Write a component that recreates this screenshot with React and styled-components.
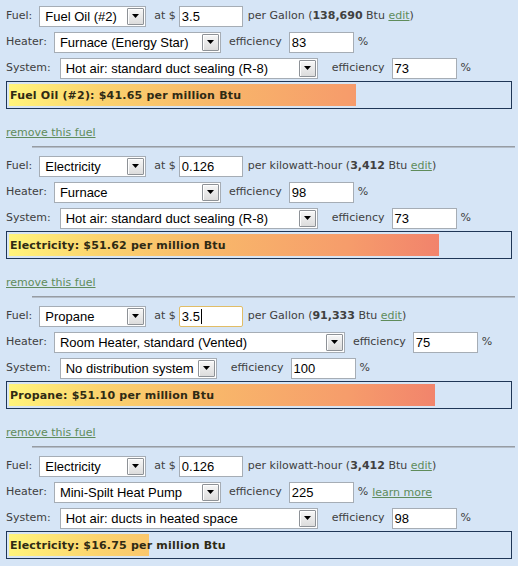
import React from "react";
import styled, { createGlobalStyle } from "styled-components";

const GlobalStyle = createGlobalStyle`
  html, body { margin: 0; padding: 0; background: #d6e5f6; overflow: hidden; }
  body {
    font-family: "DejaVu Sans", Verdana, sans-serif;
    font-size: 11px;
    color: #404040;
  }
`;

const Page = styled.div`
  width: 518px;
  background: #d6e5f6;
`;

const Block = styled.section`
  display: flex;
  flex-direction: column;
  padding-top: 5px;
`;

const Row = styled.div`
  display: flex;
  align-items: center;
  height: 22px;
  padding-left: 6px;
  white-space: nowrap;
  & + & { margin-top: 4px; }
`;

const Text = styled.span`
  margin-left: ${(p) => p.$ml || 0}px;
  line-height: 14px;
`;

const Link = styled.a`
  color: #5f8c5b;
  text-decoration: underline;
  margin-left: ${(p) => p.$ml || 0}px;
  cursor: pointer;
`;

const SelectBox = styled.div`
  box-sizing: border-box;
  display: flex;
  align-items: center;
  width: ${(p) => p.$w}px;
  height: 21px;
  margin-left: ${(p) => p.$ml || 0}px;
  padding: 1px;
  background: #fff;
  border: 1px solid #a6adb5;
  font-family: "Liberation Sans", Arial, sans-serif;
  font-size: 13px;
  color: #000;
`;

const SelectText = styled.span`
  flex: 1;
  padding-left: 4px;
  overflow: hidden;
  white-space: nowrap;
`;

const ArrowBtn = styled.span`
  box-sizing: border-box;
  display: flex;
  align-items: center;
  justify-content: center;
  width: 17px;
  height: 17px;
  border: 1px solid #8e9297;
  border-radius: 1px;
  background: linear-gradient(#f7f7f7, #dcdcdc);
  box-shadow: inset 1px 1px 0 #ffffff;
`;

const Field = styled.div`
  box-sizing: border-box;
  display: flex;
  align-items: center;
  width: ${(p) => p.$w || 65}px;
  height: 21px;
  margin-left: ${(p) => p.$ml || 0}px;
  padding-left: 2px;
  background: #fff;
  border: 1px solid ${(p) => (p.$focused ? "#e1bd67" : "#a6adb5")};
  border-radius: ${(p) => (p.$focused ? "2px" : "0")};
  font-family: "Liberation Sans", Arial, sans-serif;
  font-size: 13px;
  color: #000;
`;

const Caret = styled.span`
  display: inline-block;
  width: 1px;
  height: 15px;
  background: #000;
  margin-left: 1px;
`;

const BarBox = styled.div`
  box-sizing: border-box;
  display: grid;
  width: 506px;
  margin: 2px 0 0 6px;
  padding: 2px;
  border: 1px solid #1f3656;
`;

const Fill = styled.div`
  grid-area: 1 / 1;
  height: 22px;
  background-image: linear-gradient(
    to right,
    #fff47b 0%,
    #fbd36e 18%,
    #f8b86a 40%,
    #f69c6b 68%,
    #f1806c 88%,
    #ee7468 100%
  );
  background-size: 500px 100%;
  background-repeat: no-repeat;
`;

const BarLabel = styled.div`
  grid-area: 1 / 1;
  align-self: center;
  padding-left: 1px;
  font-weight: bold;
  font-size: 11px;
  letter-spacing: 0.2px;
  color: #2f2a14;
  white-space: nowrap;
`;

const RemoveLink = styled(Link)`
  align-self: flex-start;
  margin: 17px 0 0 6px;
  line-height: 14px;
`;

const Separator = styled.hr`
  margin: 6px 3px 2px 32px;
  height: 0;
  border: 0;
  border-top: 1px solid #979ca3;
  border-bottom: 1px solid #b3bdc9;
`;

const Arrow = () => (
  <svg width="7" height="4" viewBox="0 0 7 4">
    <polygon points="0,0 7,0 3.5,4" fill="#000" />
  </svg>
);

const Select = ({ value, w, ml }) => (
  <SelectBox $w={w} $ml={ml}>
    <SelectText>{value}</SelectText>
    <ArrowBtn>
      <Arrow />
    </ArrowBtn>
  </SelectBox>
);

const fuels = [
  {
    fuel: "Fuel Oil (#2)",
    price: "3.5",
    unit: "Gallon",
    btu: "138,690",
    heater: "Furnace (Energy Star)",
    heaterW: 167,
    heaterEff: "83",
    system: "Hot air: standard duct sealing (R-8)",
    systemW: 258,
    systemEff: "73",
    cost: 41.65,
  },
  {
    fuel: "Electricity",
    price: "0.126",
    unit: "kilowatt-hour",
    btu: "3,412",
    heater: "Furnace",
    heaterW: 167,
    heaterEff: "98",
    system: "Hot air: standard duct sealing (R-8)",
    systemW: 258,
    systemEff: "73",
    cost: 51.62,
  },
  {
    fuel: "Propane",
    price: "3.5",
    focused: true,
    unit: "Gallon",
    btu: "91,333",
    heater: "Room Heater, standard (Vented)",
    heaterW: 291,
    heaterEff: "75",
    system: "No distribution system",
    systemW: 157,
    systemEff: "100",
    cost: 51.1,
  },
  {
    fuel: "Electricity",
    price: "0.126",
    unit: "kilowatt-hour",
    btu: "3,412",
    heater: "Mini-Spilt Heat Pump",
    heaterW: 167,
    heaterEff: "225",
    learnMore: true,
    system: "Hot air: ducts in heated space",
    systemW: 258,
    systemEff: "98",
    cost: 16.75,
  },
];

const MAX_COST = 60;

const FuelBlock = ({ f, last }) => (
  <Block>
    <Row>
      <Text>Fuel:</Text>
      <Select value={f.fuel} w={107} ml={7} />
      <Text $ml={8}>at $</Text>
      <Field $ml={3} $w={64} $focused={f.focused}>
        {f.price}
        {f.focused && <Caret />}
      </Field>
      <Text $ml={5}>
        per {f.unit} (<b>{f.btu}</b> Btu <Link>edit</Link>)
      </Text>
    </Row>
    <Row>
      <Text>Heater:</Text>
      <Select value={f.heater} w={f.heaterW} ml={7} />
      <Text $ml={8}>efficiency</Text>
      <Field $ml={7}>{f.heaterEff}</Field>
      <Text $ml={4}>%</Text>
      {f.learnMore && <Link $ml={4}>learn more</Link>}
    </Row>
    <Row>
      <Text>System:</Text>
      <Select value={f.system} w={f.systemW} ml={9} />
      <Text $ml={14}>efficiency</Text>
      <Field $ml={7}>{f.systemEff}</Field>
      <Text $ml={4}>%</Text>
    </Row>
    <BarBox>
      <Fill style={{ width: `${(f.cost / MAX_COST) * 100}%` }} />
      <BarLabel>
        {f.fuel}: ${f.cost.toFixed(2)} per million Btu
      </BarLabel>
    </BarBox>
    {!last && <RemoveLink>remove this fuel</RemoveLink>}
    {!last && <Separator />}
  </Block>
);

export default function App() {
  return (
    <Page>
      <GlobalStyle />
      {fuels.map((f, i) => (
        <FuelBlock key={i} f={f} last={i === fuels.length - 1} />
      ))}
    </Page>
  );
}
